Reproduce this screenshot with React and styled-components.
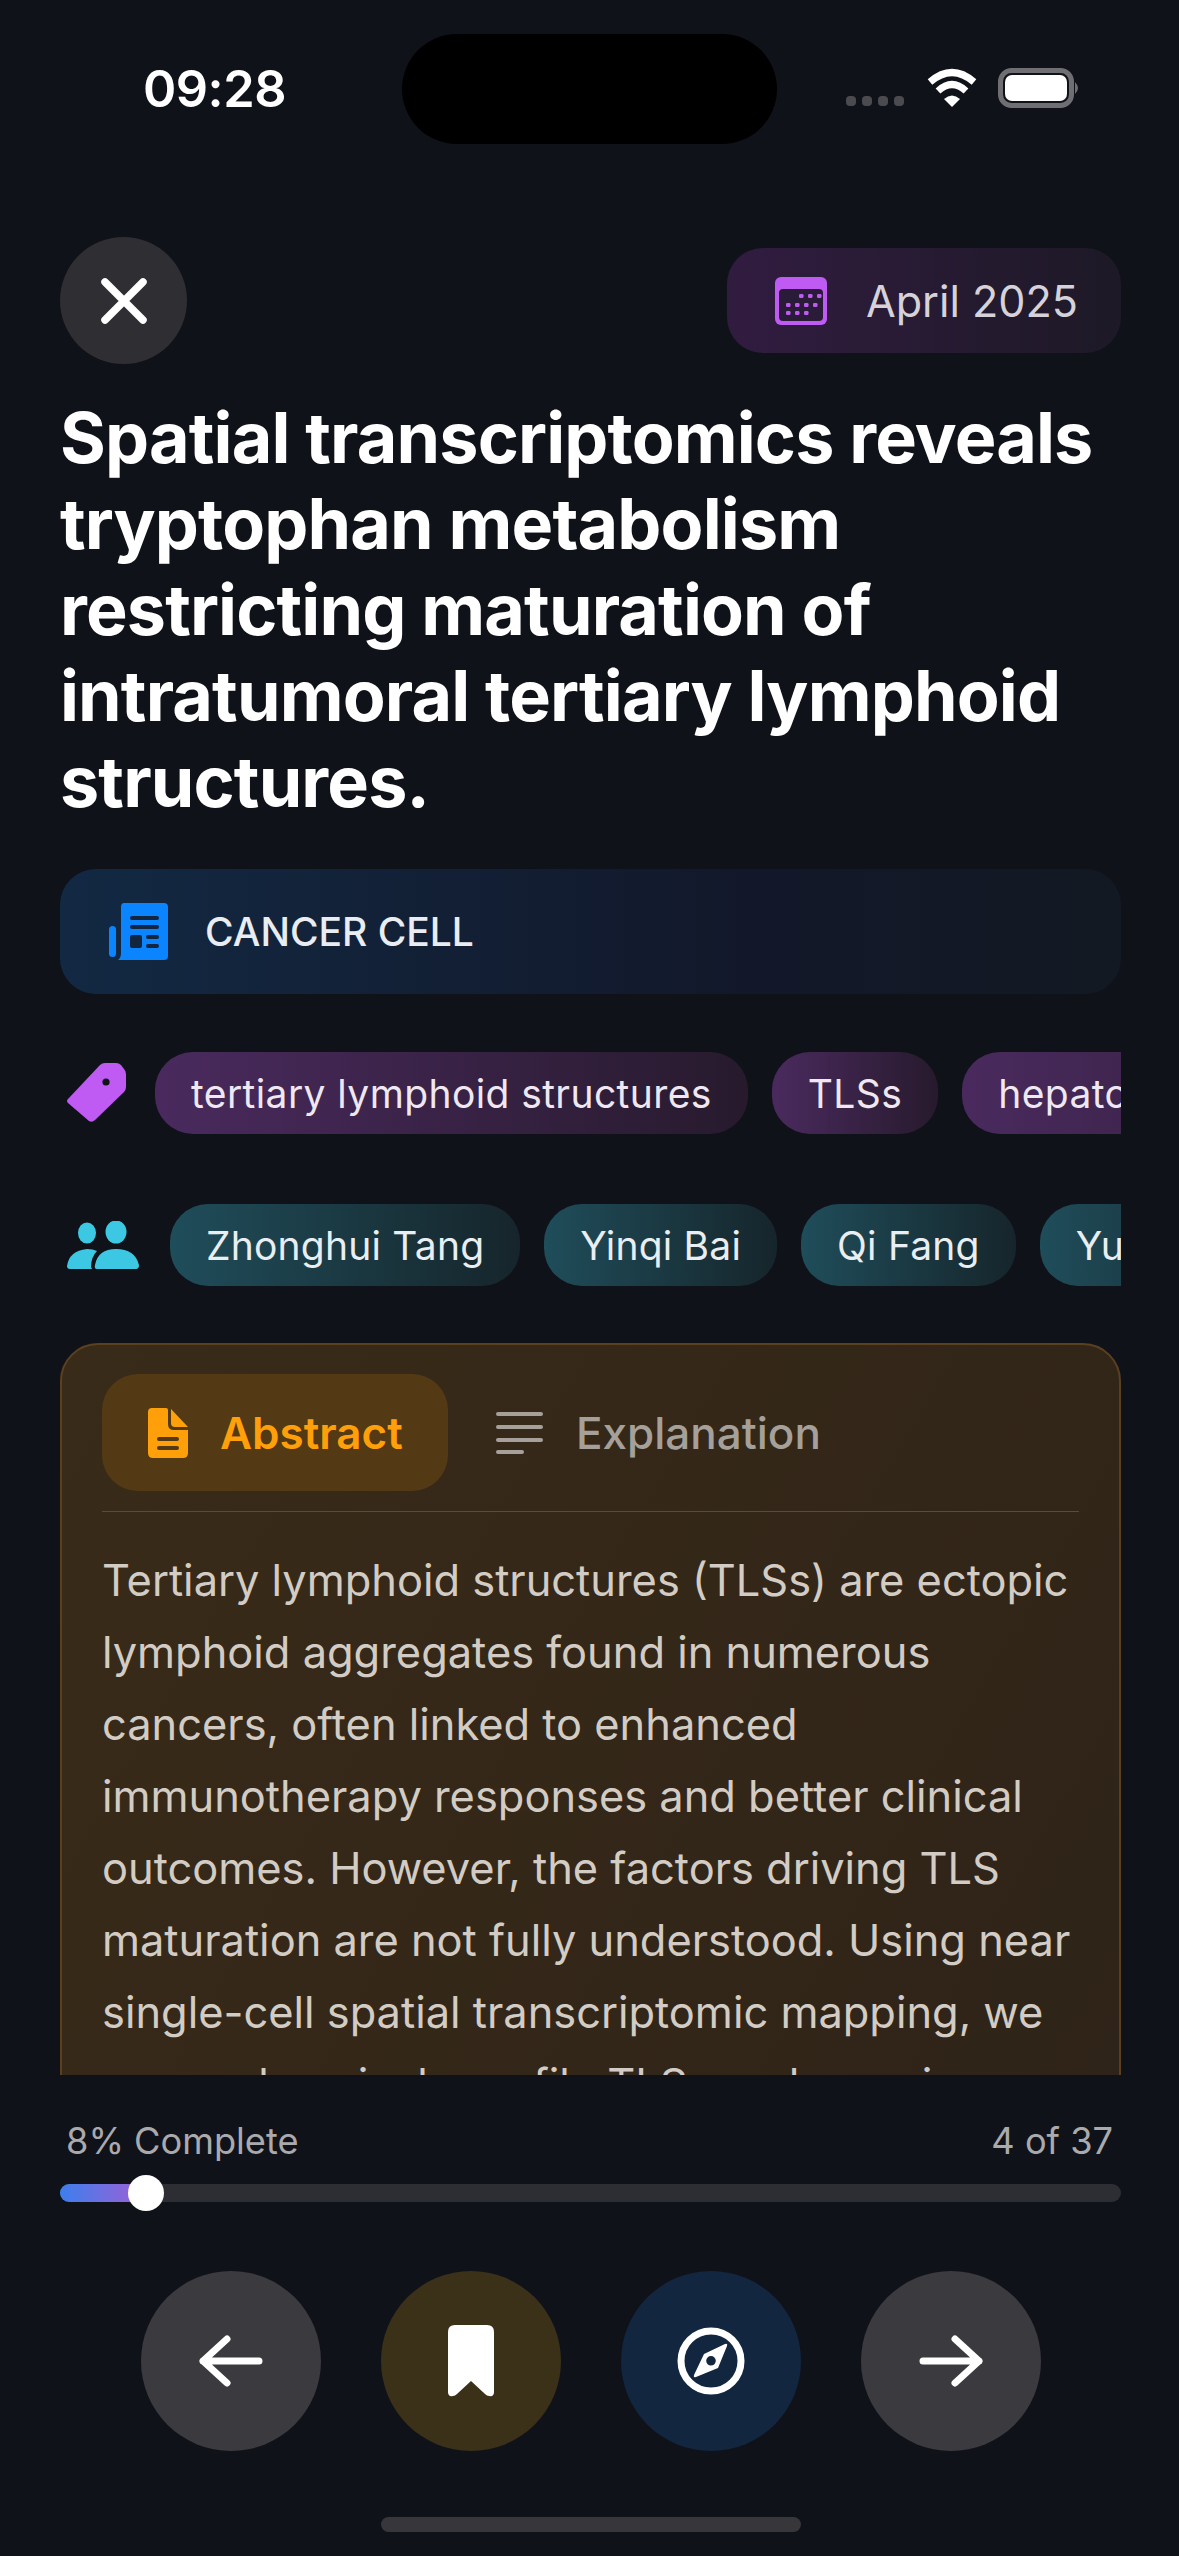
import React from "react";
import styled, { createGlobalStyle } from "styled-components";

const Global = createGlobalStyle`
  html, body { margin: 0; padding: 0; background: #10121a; }
  * { box-sizing: border-box; }
  body { font-family: Inter, "Noto Sans", sans-serif; }
`;

const Page = styled.div`
  width: 1179px;
  height: 2556px;
  background: #10121a;
  display: flex;
  flex-direction: column;
  overflow: hidden;
  color: #fff;
`;

const StatusBar = styled.div`
  height: 237px;
  flex: none;
  padding: 34px 98px 0 143px;
  display: flex;
  align-items: flex-start;
`;

const Time = styled.div`
  width: 259px;
  font-size: 50.5px;
  line-height: 110px;
  font-weight: 600;
  letter-spacing: -0.5px;
`;

const Island = styled.div`
  width: 375px;
  height: 110px;
  border-radius: 55px;
  background: #000;
`;

const StatusIcons = styled.div`
  margin-left: auto;
  width: 235px;
  height: 110px;
  padding-top: 34px;
  display: flex;
  align-items: flex-start;
  justify-content: flex-end;
`;

const Content = styled.div`
  flex: 1;
  min-height: 0;
  overflow: hidden;
  padding: 0 58px 0 60px;
  display: flex;
  flex-direction: column;
`;

const HeaderRow = styled.div`
  display: flex;
  align-items: center;
  justify-content: space-between;
  flex: none;
`;

const CloseButton = styled.button`
  width: 127px;
  height: 127px;
  border: 0;
  padding: 0;
  border-radius: 50%;
  background: #2e2e33;
  display: flex;
  align-items: center;
  justify-content: center;
`;

const DatePill = styled.div`
  width: 394px;
  height: 105px;
  border-radius: 36px;
  padding-left: 48px;
  display: flex;
  align-items: center;
  gap: 39px;
  background: linear-gradient(90deg, #311c40, #1d1926);
`;

const DateText = styled.span`
  font-size: 43.1px;
  color: #d6d2da;
`;

const Title = styled.h1`
  margin: 31px 0 44px;
  font-size: 70px;
  line-height: 86px;
  font-weight: 700;
  letter-spacing: -0.85px;
  color: #fff;
  flex: none;
`;

const JournalBar = styled.div`
  height: 125px;
  flex: none;
  border-radius: 36px;
  padding-left: 49px;
  display: flex;
  align-items: center;
  gap: 37px;
  background: linear-gradient(90deg, #122943, #12182a 65%, #121922);
`;

const JournalName = styled.span`
  font-size: 39px;
  font-weight: 500;
  color: #e9edf2;
`;

const ChipRow = styled.div`
  height: 82px;
  flex: none;
  margin-top: ${(p) => p.$top}px;
  display: flex;
  align-items: center;
  gap: 24px;
  overflow: hidden;
`;

const RowIcon = styled.span`
  flex: none;
  width: ${(p) => p.$w}px;
  display: flex;
  padding-left: ${(p) => p.$left}px;
`;

const Chip = styled.span`
  flex: none;
  height: 82px;
  border-radius: 38px;
  padding: 0 36px;
  display: flex;
  align-items: center;
  font-size: 39px;
  letter-spacing: ${(p) => (p.$kind === "tag" ? "0.4px" : "0.2px")};
  white-space: nowrap;
  color: ${(p) => (p.$kind === "tag" ? "#efe8f3" : "#e8eef2")};
  background: ${(p) =>
    p.$kind === "tag"
      ? "linear-gradient(90deg, #4a2a5e, #271a2d)"
      : "linear-gradient(90deg, #1f4d5a, #16252b)"};
`;

const Card = styled.section`
  margin-top: 57px;
  flex: none;
  border: 2px solid #5b4020;
  border-radius: 38px;
  padding: 29px 40px 40px;
  background: linear-gradient(120deg, #392b18, #2e2318);
`;

const Tabs = styled.div`
  display: flex;
  align-items: center;
  padding-bottom: 20px;
  border-bottom: 1px solid #5c4b38;
`;

const Tab = styled.div`
  height: 117px;
  width: ${(p) => (p.$active ? "346px" : "auto")};
  margin-left: ${(p) => (p.$active ? "0" : "48px")};
  border-radius: 36px;
  padding-left: ${(p) => (p.$active ? "46px" : "0")};
  display: flex;
  align-items: center;
  gap: ${(p) => (p.$active ? "32px" : "33px")};
  font-size: 44px;
  font-weight: ${(p) => (p.$active ? 600 : 500)};
  color: ${(p) => (p.$active ? "#ff9f0a" : "#a5a099")};
  background: ${(p) => (p.$active ? "#533a15" : "transparent")};
`;

const Body = styled.p`
  margin: 32px 0 0;
  font-size: 43.4px;
  line-height: 72px;
  color: #d2ccc5;
`;

const Footer = styled.div`
  flex: none;
  height: 481px;
  padding: 0 58px 0 60px;
  display: flex;
  flex-direction: column;
`;

const ProgressLabels = styled.div`
  margin-top: 44px;
  padding: 0 8px 0 6px;
  height: 44px;
  display: flex;
  align-items: center;
  justify-content: space-between;
  font-size: 36.2px;
  color: #aaaaad;
`;

const Track = styled.div`
  position: relative;
  margin-top: 21px;
  height: 18px;
  border-radius: 9px;
  background: #2d2e34;
`;

const Fill = styled.div`
  height: 100%;
  border-radius: 9px 0 0 9px;
  background: linear-gradient(90deg, #3c7fec, #a05fd6);
`;

const Thumb = styled.div`
  position: absolute;
  top: -9px;
  width: 36px;
  height: 36px;
  margin-left: -18px;
  border-radius: 50%;
  background: #fff;
`;

const Controls = styled.div`
  margin-top: 69px;
  display: flex;
  justify-content: center;
  gap: 60px;
`;

const RoundButton = styled.button`
  width: 180px;
  height: 180px;
  border: 0;
  padding: 0;
  border-radius: 50%;
  display: flex;
  align-items: center;
  justify-content: center;
  background: ${(p) => p.$bg};
`;

const HomeBar = styled.div`
  margin: 66px auto 0;
  width: 420px;
  height: 15px;
  border-radius: 8px;
  background: #36363b;
`;

const ABSTRACT =
  "Tertiary lymphoid structures (TLSs) are ectopic lymphoid aggregates found in numerous cancers, often linked to enhanced immunotherapy responses and better clinical outcomes. However, the factors driving TLS maturation are not fully understood. Using near single-cell spatial transcriptomic mapping, we comprehensively profile TLSs and examine their cellular composition across tumors.";

const StatusGlyphs = () => (
  <svg width="235" height="42" viewBox="0 0 235 42">
    <g fill="#4a4a4f">
      <rect x="0" y="28" width="10" height="10" rx="4" />
      <rect x="16" y="28" width="10" height="10" rx="4" />
      <rect x="32" y="28" width="10" height="10" rx="4" />
      <rect x="48" y="28" width="10" height="10" rx="4" />
    </g>
    <g fill="none" stroke="#fff" strokeWidth="7">
      <path d="M84 14 Q106 -5 128 14" />
      <path d="M92 23 Q106 10 120 23" />
    </g>
    <path d="M98 31 Q106 24 114 31 L106 39 Z" fill="#fff" />
    <rect x="154.5" y="2.5" width="71" height="35" rx="11" fill="none" stroke="#6e6e73" strokeWidth="5" />
    <rect x="159" y="7" width="62" height="26" rx="7" fill="#fff" />
    <path d="M229 14 Q235 20 229 26 Z" fill="#6e6e73" />
  </svg>
);

const CloseIcon = () => (
  <svg width="46" height="46" viewBox="0 0 46 46">
    <path d="M4 4 L42 42 M42 4 L4 42" stroke="#fff" strokeWidth="7.5" strokeLinecap="round" />
  </svg>
);

const CalendarIcon = () => {
  const dots = [
    [26, 19], [35, 19], [44, 19],
    [13, 28], [22, 28], [31, 28], [40, 28],
    [13, 36], [22, 36], [31, 36],
  ];
  return (
    <svg width="52" height="48" viewBox="0 0 52 48" style={{ flex: "none" }}>
      <rect width="52" height="48" rx="6" fill="#bf5af2" />
      <rect x="4" y="12" width="44" height="32" rx="4" fill="#2a1c38" />
      {dots.map(([x, y]) => (
        <rect key={`${x}-${y}`} x={x - 2} y={y - 2} width="4.5" height="4" rx="1.2" fill="#bf5af2" />
      ))}
    </svg>
  );
};

const NewsIcon = () => (
  <svg width="59" height="57" viewBox="0 0 59 57" style={{ flex: "none" }}>
    <rect x="0" y="23" width="7" height="31" rx="3.5" fill="#0a84ff" />
    <path d="M15 0 H55 Q59 0 59 4 V53 Q59 57 55 57 H9 Q12 55 12 50 V4 Q12 0 15 0 Z" fill="#0a84ff" />
    <g fill="#12263f">
      <rect x="21" y="13" width="29" height="4" rx="2" />
      <rect x="21" y="22" width="29" height="4" rx="2" />
      <rect x="21" y="32" width="12" height="13" rx="2" />
      <rect x="37" y="32" width="13" height="4" rx="2" />
      <rect x="37" y="41" width="13" height="4" rx="2" />
    </g>
  </svg>
);

const TagIcon = () => (
  <svg width="60" height="60" viewBox="0 0 60 60">
    <path
      d="M2 36 L34 2 Q36 0 39 0 H50 Q53 0 55 2 L58 6 Q60 8 60 11 V24 Q60 27 58 29 L29 57 Q26 60 23 58 L2 40 Q0 38 2 36 Z"
      fill="#bf5af2"
    />
    <circle cx="40" cy="19" r="3.6" fill="#10121a" />
  </svg>
);

const PeopleIcon = () => (
  <svg width="72" height="48" viewBox="0 0 72 48">
    <g fill="#3cc8e2">
      <ellipse cx="20" cy="12" rx="9" ry="10.5" />
      <ellipse cx="49" cy="11" rx="10.5" ry="11.5" />
      <path d="M3 48 Q0 48 0 45 Q2 30 20 28 Q26 28 30 30 Q24 36 24 46 L25 48 Z" />
      <path d="M30 48 Q27 48 28 44 Q31 28 49 28 Q68 28 72 44 Q72 48 69 48 Z" />
    </g>
  </svg>
);

const DocIcon = () => (
  <svg width="40" height="50" viewBox="0 0 40 50" style={{ flex: "none" }}>
    <path
      d="M4 0 H18 Q20 0 20 2 V16 Q20 22 26 22 H40 V45 Q40 50 35 50 H5 Q0 50 0 45 V4 Q0 0 4 0 Z"
      fill="#ff9f0a"
    />
    <path d="M23 1 L40 19 H27 Q23 19 23 15 Z" fill="#ff9f0a" />
    <rect x="9" y="29" width="22" height="4" rx="2" fill="#533a15" />
    <rect x="9" y="38" width="22" height="4" rx="2" fill="#533a15" />
  </svg>
);

const LinesIcon = () => (
  <svg width="47" height="42" viewBox="0 0 47 42" style={{ flex: "none" }}>
    <g fill="#a5a099">
      <rect x="0" y="0" width="47" height="4" rx="2" />
      <rect x="0" y="13" width="47" height="4" rx="2" />
      <rect x="0" y="26" width="47" height="4" rx="2" />
      <rect x="0" y="38" width="28" height="4" rx="2" />
    </g>
  </svg>
);

const ArrowIcon = ({ flip }) => (
  <svg width="64" height="52" viewBox="0 0 64 52" style={flip ? { transform: "scaleX(-1)" } : undefined}>
    <path
      d="M28 4 L4 26 L28 48 M4 26 H60"
      fill="none"
      stroke="#fff"
      strokeWidth="7"
      strokeLinecap="round"
      strokeLinejoin="round"
    />
  </svg>
);

const BookmarkIcon = () => (
  <svg width="46" height="72" viewBox="0 0 46 72">
    <path
      d="M7 0 H39 Q46 0 46 7 V67 Q46 72 41 71 Q39 71 37 69 L23 56 L9 69 Q7 71 5 71 Q0 72 0 67 V7 Q0 0 7 0 Z"
      fill="#fff"
    />
  </svg>
);

const CompassIcon = () => (
  <svg width="68" height="68" viewBox="0 0 68 68">
    <circle cx="34" cy="34" r="30" fill="none" stroke="#fff" strokeWidth="7" />
    <path
      fillRule="evenodd"
      d="M50 19 L41 41 L19 50 Q16 51 17 48 L27 27 L48 17 Q51 16 50 19 Z M34 29 A4.8 4.8 0 1 0 34 38.6 A4.8 4.8 0 1 0 34 29 Z"
      fill="#fff"
    />
  </svg>
);

const TAGS = ["tertiary lymphoid structures", "TLSs", "hepatocellular carcinoma"];
const AUTHORS = ["Zhonghui Tang", "Yinqi Bai", "Qi Fang", "Yu Zhang"];

export default function App() {
  return (
    <Page>
      <Global />
      <StatusBar>
        <Time>09:28</Time>
        <Island />
        <StatusIcons>
          <StatusGlyphs />
        </StatusIcons>
      </StatusBar>
      <Content>
        <HeaderRow>
          <CloseButton aria-label="Close">
            <CloseIcon />
          </CloseButton>
          <DatePill>
            <CalendarIcon />
            <DateText>April 2025</DateText>
          </DatePill>
        </HeaderRow>
        <Title>
          Spatial transcriptomics reveals tryptophan metabolism restricting maturation of intratumoral tertiary
          lymphoid structures.
        </Title>
        <JournalBar>
          <NewsIcon />
          <JournalName>CANCER CELL</JournalName>
        </JournalBar>
        <ChipRow $top={58}>
          <RowIcon $w={71} $left={6}>
            <TagIcon />
          </RowIcon>
          {TAGS.map((t) => (
            <Chip key={t} $kind="tag">
              {t}
            </Chip>
          ))}
        </ChipRow>
        <ChipRow $top={70}>
          <RowIcon $w={86} $left={7}>
            <PeopleIcon />
          </RowIcon>
          {AUTHORS.map((a) => (
            <Chip key={a} $kind="author">
              {a}
            </Chip>
          ))}
        </ChipRow>
        <Card>
          <Tabs>
            <Tab $active>
              <DocIcon />
              Abstract
            </Tab>
            <Tab>
              <LinesIcon />
              Explanation
            </Tab>
          </Tabs>
          <Body>{ABSTRACT}</Body>
        </Card>
      </Content>
      <Footer>
        <ProgressLabels>
          <span>8% Complete</span>
          <span>4 of 37</span>
        </ProgressLabels>
        <Track>
          <Fill style={{ width: "8%" }} />
          <Thumb style={{ left: "8.1%" }} />
        </Track>
        <Controls>
          <RoundButton $bg="#3a3a3f" aria-label="Previous">
            <ArrowIcon />
          </RoundButton>
          <RoundButton $bg="#3b3118" aria-label="Bookmark">
            <BookmarkIcon />
          </RoundButton>
          <RoundButton $bg="#12263f" aria-label="Explore">
            <CompassIcon />
          </RoundButton>
          <RoundButton $bg="#3a3a3f" aria-label="Next">
            <ArrowIcon flip />
          </RoundButton>
        </Controls>
        <HomeBar />
      </Footer>
    </Page>
  );
}
